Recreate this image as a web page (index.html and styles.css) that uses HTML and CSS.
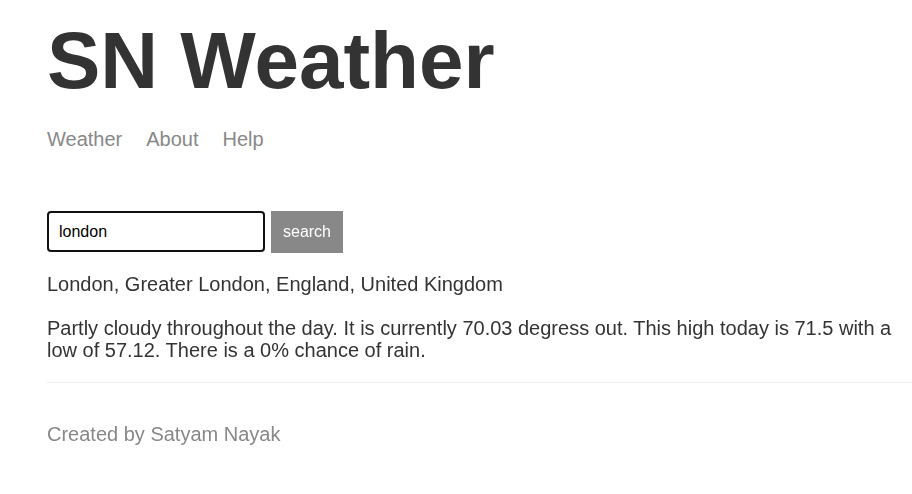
FILE: index.html
```html
<!DOCTYPE html>
<html>
<head>
<meta charset="utf-8">
<title>SN Weather</title>
<link rel="stylesheet" href="styles.css">
</head>
<body>
<div class="main">
  <header class="header">
    <h1 class="title">SN Weather</h1>
    <nav class="nav">
      <a class="nav-link" href="#">Weather</a>
      <a class="nav-link" href="#">About</a>
      <a class="nav-link" href="#">Help</a>
    </nav>
  </header>
  <form class="search-form">
    <input class="search-input" type="text" value="london" autofocus>
    <button class="search-btn" type="button">search</button>
  </form>
  <p class="location">London, Greater London, England, United Kingdom</p>
  <p class="forecast">Partly cloudy throughout the day. It is currently 70.03 degress out. This high today is 71.5 with a low of 57.12. There is a 0% chance of rain.</p>
  <footer class="footer">
    <p class="credit">Created by Satyam Nayak</p>
  </footer>
</div>
</body>
</html>
```
FILE: styles.css
```css
html, body {
  margin: 0;
  padding: 0;
  background: #ffffff;
}
body {
  font-family: "Liberation Sans", Arial, sans-serif;
  color: #333333;
}
.main {
  padding: 15px 0 0 47px;
}
.title {
  margin: 0;
  font-size: 80px;
  font-weight: bold;
  line-height: 92px;
  color: #333333;
}
.nav {
  display: flex;
  gap: 24px;
  margin-top: 21px;
  line-height: 23px;
}
.nav-link {
  font-size: 20px;
  color: #888888;
  text-decoration: none;
}
.search-form {
  display: flex;
  gap: 6px;
  margin-top: 60px;
}
.search-input {
  box-sizing: border-box;
  width: 218px;
  height: 41px;
  margin: 0;
  padding: 0 10px;
  border: 2px solid #111111;
  border-radius: 4px;
  font-family: "Liberation Sans", Arial, sans-serif;
  font-size: 16px;
  color: #000000;
  outline: none;
}
.search-btn {
  box-sizing: border-box;
  width: 72px;
  height: 42px;
  margin: 0;
  padding: 0;
  border: none;
  background: #888888;
  color: #ffffff;
  font-family: "Liberation Sans", Arial, sans-serif;
  font-size: 16px;
}
.location {
  margin: 20px 0 0;
  font-size: 20px;
  line-height: 23px;
}
.forecast {
  margin: 21px 0 0;
  font-size: 20px;
  line-height: 22px;
  padding-bottom: 21px;
  border-bottom: 1px solid #eeeeee;
}
.footer {
  margin-top: 40px;
}
.credit {
  margin: 0;
  font-size: 20px;
  line-height: 23px;
  color: #888888;
}
```
